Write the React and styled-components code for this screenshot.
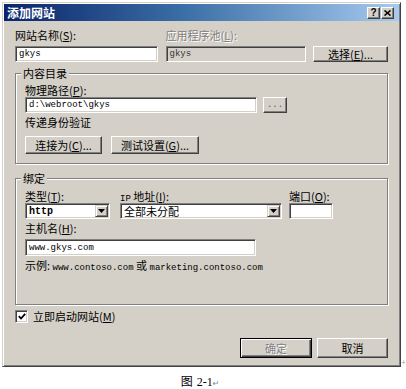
import React from 'react';
import styled, { createGlobalStyle } from 'styled-components';

const CJK = `"Noto Sans CJK SC", "Noto Sans", sans-serif`;
const MONO = `"Liberation Mono", "Noto Sans CJK SC", monospace`;

const Global = createGlobalStyle`
  html, body { margin: 0; padding: 0; background: #fff; }
  body { font-family: ${CJK}; font-size: 11px; color: #000; }
  * { box-sizing: border-box; }
`;

const Page = styled.div`
  width: 406px;
  padding: 2px 0 0 2px;
`;

const WindowRow = styled.div`
  display: flex;
  align-items: flex-end;
`;

const Window = styled.div`
  width: 399px;
  height: 365px;
  flex: none;
  background: #d4d0c8;
  border: 1px solid;
  border-color: #d4d0c8 #404040 #404040 #d4d0c8;
  box-shadow: inset 1px 1px #fff, inset -1px -1px #808080;
  padding: 1px;
  display: flex;
  flex-direction: column;
  overflow: hidden;
`;

const Anchor = styled.span`
  font: 6px "DejaVu Sans", sans-serif;
  color: #9a9a9a;
  line-height: 6px;
  margin: 0 0 2px 0;
`;

const TitleBar = styled.div`
  height: 17px;
  flex: none;
  display: flex;
  align-items: center;
  justify-content: space-between;
  background: linear-gradient(90deg, #0a246a 0%, #3a6ea5 45%, #a6caf0 100%);
  padding: 0 5px 0 3px;
`;

const Title = styled.span`
  color: #fff;
  font-family: ${CJK};
  font-weight: bold;
  font-size: 12px;
  line-height: 17px;
`;

const TitleButtons = styled.div`
  display: flex;
  gap: 1px;
`;

const CaptionButton = styled.span`
  width: 13px;
  height: 12px;
  background: #d4d0c8;
  border: 1px solid;
  border-color: #fff #404040 #404040 #fff;
  box-shadow: inset -1px -1px #808080;
  display: flex;
  align-items: center;
  justify-content: center;
  font: bold 10px "Liberation Sans", sans-serif;
  line-height: 10px;
  color: #000;
`;

const Content = styled.div`
  flex: 1;
  display: flex;
  flex-direction: column;
  padding: 8px 11px 0;
`;

const TopGrid = styled.div`
  display: grid;
  grid-template-columns: 143px 140px 75px;
  grid-template-rows: 13px 16px;
  row-gap: 4px;
  justify-content: space-between;
`;

const Label = styled.div`
  font-family: ${CJK};
  font-size: 11px;
  line-height: 13px;
  height: 13px;
  white-space: nowrap;
  margin-top: ${(p) => p.$mt || 0}px;
  color: ${(p) => (p.$disabled ? '#808080' : '#000')};
  text-shadow: ${(p) => (p.$disabled ? '1px 1px #fff' : 'none')};
`;

const Mono = styled.span`
  font-family: ${MONO};
  font-size: ${(p) => p.$size || 9}px;
`;

const TextBox = styled.div`
  width: ${(p) => p.$w}px;
  height: ${(p) => p.$h || 16}px;
  flex: none;
  background: ${(p) => (p.$disabled ? '#d4d0c8' : '#fff')};
  border: 1px solid;
  border-color: #808080 #fff #fff #808080;
  box-shadow: inset 1px 1px #404040, inset -1px -1px #d4d0c8;
  padding: 0 3px;
  display: flex;
  align-items: center;
  font-family: ${MONO};
  font-size: 9px;
  color: ${(p) => (p.$disabled ? '#333' : '#000')};
  white-space: nowrap;
  overflow: hidden;
`;

const Btn = styled.button`
  width: ${(p) => p.$w}px;
  height: ${(p) => p.$h}px;
  flex: none;
  margin: 0;
  padding: 0;
  background: #d4d0c8;
  border: 1px solid;
  border-color: ${(p) => (p.$default ? '#000' : '#fff #404040 #404040 #fff')};
  box-shadow: ${(p) =>
    p.$default
      ? 'inset 1px 1px #fff, inset -1px -1px #404040, inset -2px -2px #808080'
      : 'inset -1px -1px #808080'};
  font-family: ${CJK};
  font-size: 11px;
  line-height: 12px;
  color: ${(p) => (p.$disabled ? '#808080' : '#000')};
  text-shadow: ${(p) => (p.$disabled ? '1px 1px #fff' : 'none')};
  display: flex;
  align-items: center;
  justify-content: center;
  white-space: nowrap;
  cursor: default;
`;

const Dots = styled.span`
  font: 9px ${MONO};
  color: #555;
`;

const Group = styled.fieldset`
  margin: ${(p) => p.$mt}px 0 0;
  padding: ${(p) => p.$pt}px 9px ${(p) => p.$pb}px;
  border: 1px solid #808080;
  box-shadow: 1px 1px 0 #fff, inset 1px 1px 0 #fff;
  min-inline-size: 0;
  display: flex;
  flex-direction: column;
`;

const Legend = styled.legend`
  padding: 0 2px;
  margin-left: -4px;
  font-family: ${CJK};
  font-size: 11px;
  line-height: 12px;
  height: 12px;
  background: #d4d0c8;
`;

const Row = styled.div`
  display: flex;
  align-items: ${(p) => p.$align || 'center'};
  gap: ${(p) => p.$gap || 0}px;
  margin-top: ${(p) => p.$mt || 0}px;
`;

const Field = styled.div`
  display: flex;
  flex-direction: column;
  width: ${(p) => p.$w}px;
  margin-left: ${(p) => p.$ml || 0}px;
`;

const SelectBox = styled.div`
  width: ${(p) => p.$w}px;
  height: 16px;
  background: #fff;
  border: 1px solid;
  border-color: #808080 #fff #fff #808080;
  box-shadow: inset 1px 1px #404040, inset -1px -1px #d4d0c8;
  padding: 1px;
  display: flex;
  align-items: stretch;
`;

const SelectText = styled.span`
  flex: 1;
  display: flex;
  align-items: center;
  padding-left: 2px;
  font-family: ${(p) => (p.$mono ? MONO : CJK)};
  font-size: ${(p) => (p.$mono ? 10 : 11)}px;
  font-weight: ${(p) => (p.$mono ? 'bold' : 'normal')};
  white-space: nowrap;
`;

const DropButton = styled.span`
  width: 13px;
  background: #d4d0c8;
  border: 1px solid;
  border-color: #d4d0c8 #404040 #404040 #d4d0c8;
  box-shadow: inset 1px 1px #fff, inset -1px -1px #808080;
  display: flex;
  align-items: center;
  justify-content: center;
`;

const CheckRow = styled.div`
  display: flex;
  align-items: center;
  margin-top: 5px;
  height: 13px;
`;

const CheckBox = styled.span`
  width: 13px;
  height: 13px;
  flex: none;
  background: #fff;
  border: 1px solid;
  border-color: #808080 #fff #fff #808080;
  box-shadow: inset 1px 1px #404040, inset -1px -1px #d4d0c8;
  display: flex;
  align-items: center;
  justify-content: center;
`;

const CheckLabel = styled.span`
  margin-left: 5px;
  font-family: ${CJK};
  font-size: 11px;
  line-height: 13px;
`;

const Footer = styled.div`
  display: flex;
  justify-content: flex-end;
  gap: 5px;
  margin-top: 15px;
`;

const Caption = styled.div`
  text-align: center;
  margin-top: 7px;
  line-height: 14px;
  font-family: ${CJK};
  font-size: 12px;
  padding-right: 8px;
`;

const CaptionNum = styled.span`
  font-family: "Liberation Serif", serif;
  font-size: 12px;
  margin-left: 4px;
`;

const Return = styled.span`
  font: 8px "DejaVu Sans", sans-serif;
  color: #888;
`;

const Arrow = () => (
  <svg width="7" height="4" viewBox="0 0 7 4">
    <polygon points="0,0 7,0 3.5,4" fill="#000" />
  </svg>
);

const Select = ({ w, children, mono }) => (
  <SelectBox $w={w}>
    <SelectText $mono={mono}>{children}</SelectText>
    <DropButton>
      <Arrow />
    </DropButton>
  </SelectBox>
);

export default function App() {
  return (
    <Page>
      <Global />
      <WindowRow>
        <Window>
          <TitleBar>
            <Title>添加网站</Title>
            <TitleButtons>
              <CaptionButton>?</CaptionButton>
              <CaptionButton>
                <svg width="7" height="6" viewBox="0 0 7 6">
                  <path d="M0.5 0.5 L6.5 5.5 M6.5 0.5 L0.5 5.5" stroke="#000" strokeWidth="1.6" />
                </svg>
              </CaptionButton>
            </TitleButtons>
          </TitleBar>
          <Content>
            <TopGrid>
              <Label>
                网站名称(<u>S</u>):
              </Label>
              <Label $disabled>
                应用程序池(<u>L</u>):
              </Label>
              <span />
              <TextBox $w={143}>gkys</TextBox>
              <TextBox $w={140} $disabled>
                gkys
              </TextBox>
              <Btn $w={75} $h={16}>
                选择(<u>E</u>)...
              </Btn>
            </TopGrid>

            <Group $mt={5} $pt={5} $pb={9}>
              <Legend>内容目录</Legend>
              <Label>
                物理路径(<u>P</u>):
              </Label>
              <Row $gap={6}>
                <TextBox $w={232}>d:\webroot\gkys</TextBox>
                <Btn $w={24} $h={16}>
                  <Dots>...</Dots>
                </Btn>
              </Row>
              <Label $mt={3}>传递身份验证</Label>
              <Row $gap={9} $mt={7}>
                <Btn $w={77} $h={18}>
                  连接为(<u>C</u>)...
                </Btn>
                <Btn $w={88} $h={18}>
                  测试设置(<u>G</u>)...
                </Btn>
              </Row>
            </Group>

            <Group $mt={8} $pt={6} $pb={32}>
              <Legend>绑定</Legend>
              <Row $align="flex-start">
                <Field $w={85}>
                  <Label>
                    类型(<u>T</u>):
                  </Label>
                  <Select w={85} mono>
                    http
                  </Select>
                </Field>
                <Field $w={162} $ml={10}>
                  <Label>
                    <Mono>IP</Mono> 地址(<u>I</u>):
                  </Label>
                  <Select w={162}>全部未分配</Select>
                </Field>
                <Field $w={44} $ml={7}>
                  <Label>
                    端口(<u>O</u>):
                  </Label>
                  <TextBox $w={44} />
                </Field>
              </Row>
              <Label $mt={3}>
                主机名(<u>H</u>):
              </Label>
              <Row $mt={4}>
                <TextBox $w={231} $h={17}>
                  www.gkys.com
                </TextBox>
              </Row>
              <Label $mt={3}>
                示例: <Mono>www.contoso.com</Mono> 或 <Mono>marketing.contoso.com</Mono>
              </Label>
            </Group>

            <CheckRow>
              <CheckBox>
                <svg width="8" height="7" viewBox="0 0 8 7">
                  <polyline points="0.8,3.2 3,5.5 7.2,0.8" fill="none" stroke="#000" strokeWidth="1.8" />
                </svg>
              </CheckBox>
              <CheckLabel>
                立即启动网站(<u>M</u>)
              </CheckLabel>
            </CheckRow>

            <Footer>
              <Btn $w={72} $h={20} $default $disabled>
                确定
              </Btn>
              <Btn $w={71} $h={20}>
                取消
              </Btn>
            </Footer>
          </Content>
        </Window>
        <Anchor>+</Anchor>
      </WindowRow>
      <Caption>
        图<CaptionNum>2-1</CaptionNum>
        <Return>↵</Return>
      </Caption>
    </Page>
  );
}
